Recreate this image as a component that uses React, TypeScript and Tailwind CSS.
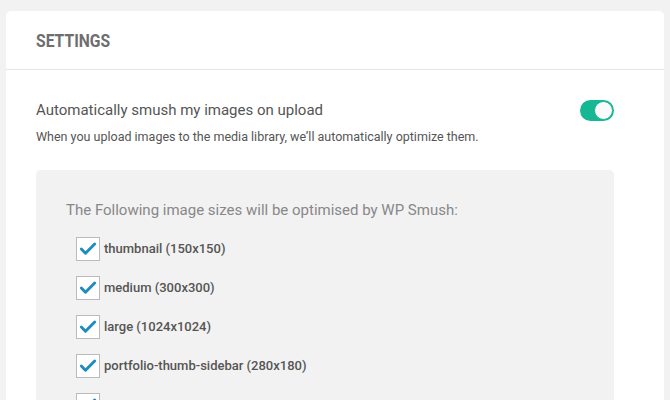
import { Check } from 'lucide-react'

const SIZES = [
  'thumbnail (150x150)',
  'medium (300x300)',
  'large (1024x1024)',
  'portfolio-thumb-sidebar (280x180)',
  '',
]

function Toggle() {
  return (
    <div className="flex h-[21px] w-[34px] items-center justify-end rounded-full bg-[#17b794] p-[1px]">
      <div className="h-[19px] w-[19px] rounded-full border border-[#17b794] bg-[#fafafa]" />
    </div>
  )
}

export default function App() {
  return (
    <div
      className="h-[400px] overflow-hidden bg-[#f2f2f2] pl-[6px] pr-[6px] pt-[11px]"
      style={{ fontFamily: 'Roboto, "Noto Sans", sans-serif' }}
    >
      <div className="rounded-[5px] bg-white">
        <div className="flex h-[59px] items-center border-b border-[#e6e6e6] px-[30px]">
          <h2 className="origin-left scale-x-[0.87] text-[18px] font-bold text-[#6e6e6e]">
            SETTINGS
          </h2>
        </div>

        <div className="px-[30px] pt-[29px]">
          <div className="flex items-center justify-between pr-[20px]">
            <span className="text-[15px] text-[#555]">Automatically smush my images on upload</span>
            <Toggle />
          </div>
          <p className="mt-[6px] text-[12.5px] text-[#555]">
            When you upload images to the media library, we’ll automatically optimize them.
          </p>

          <div className="mr-[20px] mt-[24px] rounded-[5px] bg-[#f2f2f2] px-[30px] pb-[30px] pt-[29px]">
            <p className="text-[15px] text-[#888]">
              The Following image sizes will be optimised by WP Smush:
            </p>
            <ul className="mt-[15px] flex flex-col gap-[15px] pl-[10px]">
              {SIZES.map((s, i) => (
                <li key={i} className="flex items-center gap-[4px]">
                  <span className="flex h-[24px] w-[24px] shrink-0 items-center justify-center border border-[#bbb] bg-white">
                    <Check size={20} strokeWidth={3.5} className="text-[#1e8cbe]" />
                  </span>
                  {s && <span className="text-[13px] font-medium text-[#555]">{s}</span>}
                </li>
              ))}
            </ul>
          </div>
        </div>
      </div>
    </div>
  )
}
